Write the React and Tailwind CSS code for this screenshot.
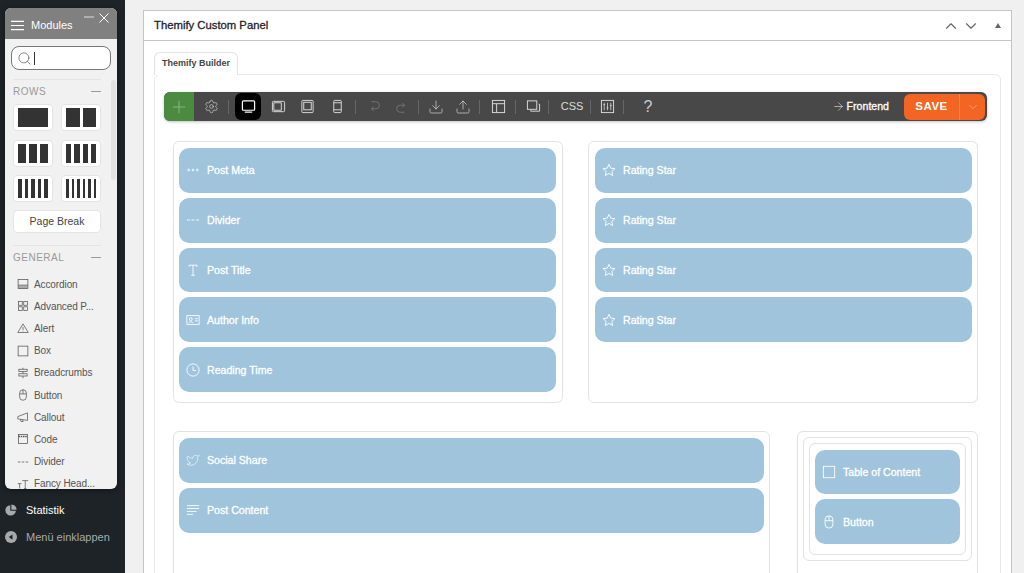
import { ChevronUp, ChevronDown, Search, Plus, Settings, Download, Upload, ArrowRight, Twitter } from "lucide-react";

const font = "font-['Liberation_Sans',Arial,sans-serif]";

function Svg({ size = 16, className = "", children }) {
  return (
    <svg width={size} height={size} viewBox="0 0 16 16" fill="none" stroke="currentColor" strokeWidth="1" className={`shrink-0 ${className}`}>
      {children}
    </svg>
  );
}

const icons = {
  dots: <><circle cx="3" cy="8" r="1" /><circle cx="8" cy="8" r="1" /><circle cx="13" cy="8" r="1" /></>,
  dashes: <path d="M1 8h3.5M6.2 8h3.5M11.5 8h3.5" />,
  title: <path d="M3.5 4.5V2.5h9v2M8 2.5v11.5M6 14h4" />,
  author: <><rect x="1" y="3" width="14" height="10" /><circle cx="5.5" cy="7" r="1.6" /><path d="M3 11.5c.4-2 4.6-2 5 0M10 6.5h3.5M10 9h3.5" /></>,
  clock: <><circle cx="8" cy="8" r="7" /><path d="M8 4v4.5h3.5" /></>,
  star: <path d="M8 1.5l2 4.4 4.8.5-3.6 3.2 1 4.7L8 11.9l-4.2 2.4 1-4.7L1.2 6.4 6 5.9z" />,
  lines: <path d="M1 3h14M1 6.3h14M1 9.6h11M1 13h7" />,
  box: <rect x="1.5" y="1.5" width="13" height="13" />,
  mouse: <><rect x="3.5" y="1" width="9" height="14" rx="4.5" /><path d="M3.5 6.5h9M8 1v5.5" /></>,
  accordion: <><rect x="1.5" y="2" width="13" height="12" /><path d="M1.5 9.5h13" /><path d="M2 10h12v3.5H2z" fill="currentColor" stroke="none" opacity=".45" /></>,
  grid: <><rect x="2" y="2" width="5" height="5" /><rect x="9" y="2" width="5" height="5" /><rect x="2" y="9" width="5" height="5" /><rect x="9" y="9" width="5" height="5" /></>,
  alert: <><path d="M8 2.5L15 14H1z" /><path d="M8 6.5v4M8 11.5v1" /></>,
  crumbs: <><path d="M8 1v14" /><rect x="2.5" y="3" width="11" height="3" fill="#f1f1f1" /><rect x="2.5" y="9" width="11" height="3" fill="#f1f1f1" /></>,
  callout: <><path d="M1 7.5l13-5v10l-13-2zM4.5 11l.8 3h3l-.8-2.4" /></>,
  code: <><rect x="2" y="2" width="12" height="12" /><path d="M2 4.5h12" strokeWidth="2" strokeDasharray="2 1" /></>,
  fancy: <path d="M7 3.5h8M11 3.5V14M9.5 14h3M1 7.5h5M3.5 7.5V14" />,
};

function Card({ icon, label, twitter }) {
  return (
    <div className="flex h-[44.8px] items-center rounded-[10px] bg-[#9fc4dc] pl-[7px] text-white">
      {twitter ? <Twitter size={14} strokeWidth={1} className="shrink-0" /> : <Svg size={14}>{icons[icon]}</Svg>}
      <span className="ml-[7px] mt-[2px] text-[10.6px] [-webkit-text-stroke:0.3px_white]">{label}</span>
    </div>
  );
}

function Column({ className = "", children }) {
  return <div className={`flex flex-col gap-[5px] rounded-[6px] border border-[#e2e2e2] ${className}`}>{children}</div>;
}

function Sep({ className = "" }) {
  return <span className={`h-[14px] w-px shrink-0 bg-[#666] ${className}`} />;
}

function Tool({ children, className = "" }) {
  return <span className={`flex h-[27px] w-[26px] shrink-0 items-center justify-center ${className}`}>{children}</span>;
}

function RowThumb({ cols }) {
  return (
    <div className="flex h-[27px] items-center justify-center gap-[3px] rounded-[4px] border border-[#e4e4e4] bg-white px-[4px]">
      {Array.from({ length: cols }).map((_, i) => (
        <span key={i} className="h-[19px] flex-1 bg-[#333]" />
      ))}
    </div>
  );
}

const rows = [1, 2, 3, 4, 5, 6];
const modules = [
  ["accordion", "Accordion"], ["grid", "Advanced P..."], ["alert", "Alert"], ["box", "Box"], ["crumbs", "Breadcrumbs"],
  ["mouse", "Button"], ["callout", "Callout"], ["code", "Code"], ["dashes", "Divider"], ["fancy", "Fancy Head..."],
];

function ModulesPanel() {
  return (
    <div className="absolute left-[5px] top-[8px] h-[481px] w-[112px] overflow-hidden rounded-[6px] bg-[#f1f1f1] shadow-[0_1px_5px_rgba(0,0,0,0.45)]">
      <div className="relative flex h-[31px] items-center bg-[#808080] pl-[6px] pt-[4px] text-white">
        <Svg size={13}><path d="M0 3h16M0 8h16M0 13h16" strokeWidth="1.4" /></Svg>
        <span className="ml-[7px] text-[11px]">Modules</span>
        <svg width="10" height="2" viewBox="0 0 10 2" stroke="currentColor" className="absolute left-[79px] top-[8px] text-[#ddd]"><path d="M0 1h10" /></svg>
        <svg width="10" height="10" viewBox="0 0 10 10" stroke="currentColor" className="absolute right-[8px] top-[5px]"><path d="M0.5 0.5l9 9M9.5 0.5l-9 9" /></svg>
      </div>
      <div className="px-[6px] pt-[7px]">
        <div className="flex h-[24px] items-center rounded-[8px] border border-[#777] bg-white pl-[5px] text-[#444]">
          <Search size={15} strokeWidth={1} />
          <span className="ml-[2px] h-[13px] w-px bg-[#333]" />
        </div>
      </div>
      <div className="relative pl-[8px] pr-[16px]">
        <div className="mt-[9px] flex items-center justify-between border-t border-[#e4e4e4] pb-[5px] pt-[4px] text-[10px] tracking-[0.5px] text-[#999]">
          <span>ROWS</span><span className="h-px w-[10px] bg-[#999]" />
        </div>
        <div className="grid grid-cols-2 gap-x-[8px] gap-y-[8.5px]">
          {rows.map((n) => <RowThumb key={n} cols={n} />)}
        </div>
        <div className="mt-[8px] flex h-[23px] items-center justify-center rounded-[4px] border border-[#e4e4e4] bg-white text-[10.5px] text-[#444]">Page Break</div>
        <div className="mt-[12px] flex items-center justify-between border-t border-[#e4e4e4] pt-[4px] text-[10px] tracking-[0.5px] text-[#999]">
          <span>GENERAL</span><span className="h-px w-[10px] bg-[#999]" />
        </div>
        <div className="mt-[8px] flex flex-col">
          {modules.map(([icon, label]) => (
            <div key={label} className="flex h-[22.2px] items-center pl-[4px] text-[10px] tracking-[-0.1px] text-[#555]">
              <Svg size={12} className="mr-[5px]">{icons[icon]}</Svg>
              <span className="whitespace-nowrap">{label}</span>
            </div>
          ))}
        </div>
      </div>
      <span className="absolute right-[1px] top-[72px] h-[100px] w-[5px] rounded-full bg-[#e2e2e2]" />
    </div>
  );
}

function Toolbar() {
  return (
    <div className="flex h-[29px] items-center rounded-[6px] bg-[#484848] text-[#ddd] shadow-[0_1px_3px_rgba(0,0,0,0.25)]">
      <span className="flex h-full w-[30px] shrink-0 items-center justify-center rounded-l-[6px] bg-[#4c8a42] text-[#8fbf85]">
        <Plus size={20} strokeWidth={1} />
      </span>
      <Tool className="ml-[4px]"><Settings size={15} strokeWidth={1} /></Tool>
      <Sep className="ml-[4px]" />
      <Tool className="ml-[6px] rounded-[6px] bg-black text-white">
        <Svg size={15}><rect x="1.5" y="2" width="13" height="10" rx="1" strokeWidth="1.3" /><path d="M4 14h8" strokeWidth="1.3" /></Svg>
      </Tool>
      <Tool className="ml-[4px]"><Svg size={15}><rect x="1.5" y="2.5" width="13" height="11" rx="1" /><path d="M3 4h8v8H3z" /></Svg></Tool>
      <Tool className="ml-[3px]"><Svg size={15}><rect x="2" y="1.5" width="12" height="13" rx="1" /><rect x="4" y="3.5" width="8" height="8" /></Svg></Tool>
      <Tool className="ml-[4px]"><Svg size={15}><rect x="4" y="1.5" width="8" height="13" rx="1" /><path d="M4 4h8M4 11.5h8" /></Svg></Tool>
      <Sep className="ml-[5px]" />
      <Tool className="ml-[6px] text-[#777]"><Svg size={14}><path d="M4 2h5a4 4 0 0 1 0 8H4M6.5 7.5L4 10l2.5 2.5" /></Svg></Tool>
      <Tool className="text-[#777]"><Svg size={14}><path d="M12 14H7a4 4 0 0 1 0-8h5M9.5 3.5L12 6 9.5 8.5" /></Svg></Tool>
      <Sep className="ml-[4px]" />
      <Tool className="ml-[4px]"><Download size={16} strokeWidth={1} /></Tool>
      <Tool className="ml-px"><Upload size={16} strokeWidth={1} /></Tool>
      <Sep className="ml-[3px]" />
      <Tool className="ml-[5px]"><Svg size={15}><rect x="1.5" y="1.5" width="13" height="13" /><path d="M1.5 5h13M6 5v9.5" /></Svg></Tool>
      <Sep className="ml-[4px]" />
      <Tool className="ml-[4px]"><Svg size={15}><rect x="1.5" y="2" width="10" height="9" /><path d="M13.5 5.5h1v7.5H5v-1" /></Svg></Tool>
      <Sep className="ml-[2px]" />
      <span className="ml-[7px] w-[32px] shrink-0 text-center text-[11px]">CSS</span>
      <Sep className="ml-[2px]" />
      <Tool className="ml-[3px]"><Svg size={15}><rect x="1.5" y="1.5" width="13" height="13" /><path d="M4.5 4v8M8 4v8M11.5 4v8M3.5 6h2M7 9.5h2M10.5 7h2" strokeWidth=".8" /></Svg></Tool>
      <Sep className="ml-[3px]" />
      <span className="ml-[11px] w-[26px] shrink-0 text-center text-[16px] leading-none text-[#ccc]">?</span>
      <span className="ml-auto flex items-center text-[10.6px] text-white [-webkit-text-stroke:0.3px_white]">
        <ArrowRight size={13} strokeWidth={1} className="mr-[2px]" />Frontend
      </span>
      <span className="ml-[15px] mr-[2px] flex h-[26px] w-[81px] shrink-0 items-center rounded-[6px] bg-[#f26522] text-white">
        <span className="flex-1 text-center text-[11.5px] font-bold tracking-[0.5px]">SAVE</span>
        <span className="flex h-full w-[26px] items-center justify-center border-l border-[#f58a4c] text-[#f9c19f]">
          <ChevronDown size={14} strokeWidth={1} />
        </span>
      </span>
    </div>
  );
}

export default function App() {
  return (
    <div className={`relative flex h-[573px] w-[1024px] overflow-hidden bg-[#f0f0f1] ${font}`}>
      <aside className="flex w-[125px] shrink-0 flex-col justify-end bg-[#1d2327] pb-[23px] pl-[5px] text-[11px]">
        <div className="flex h-[28px] items-center text-white">
          <Svg size={12} className="text-[#a7aaad]"><path d="M7 1.5a7 7 0 1 0 7.5 7.5H7z" fill="currentColor" stroke="none" /><path d="M8.5 0.5V7.5h7A7.5 7.5 0 0 0 8.5 .5z" fill="currentColor" stroke="none" /></Svg>
          <span className="ml-[9px]">Statistik</span>
        </div>
        <div className="flex h-[26px] items-center text-[#a7aaad]">
          <Svg size={12}><circle cx="8" cy="8" r="8" fill="currentColor" stroke="none" /><path d="M10 4.5v7L5 8z" fill="#1d2327" stroke="none" /></Svg>
          <span className="ml-[9px]">Menü einklappen</span>
        </div>
      </aside>

      <main className="flex-1 pl-[18px] pr-[12px] pt-[10px]">
        <div className="h-[600px] border border-[#c3c4c7] bg-white">
          <div className="flex h-[30px] items-center justify-between border-b border-[#c3c4c7] pl-[10px] pr-[10px]">
            <h2 className="text-[11.3px] text-[#1d2327] [-webkit-text-stroke:0.3px_#1d2327]">Themify Custom Panel</h2>
            <div className="flex items-center text-[#666]">
              <ChevronUp size={18} strokeWidth={1.5} />
              <ChevronDown size={18} strokeWidth={1.5} className="ml-[2px]" />
              <span className="ml-[15px] h-0 w-0 border-x-[3.5px] border-b-[5px] border-x-transparent border-b-[#666]" />
            </div>
          </div>

          <div className="pl-[10px] pr-[10px] pt-[11px]">
            <div className="relative z-10 -mb-px flex h-[23px] w-[84px] items-center justify-center rounded-t-[6px] border border-b-0 border-[#e2e2e2] bg-white text-[9px] font-bold text-[#444]">
              Themify Builder
            </div>
            <div className="h-[520px] rounded-[6px] border border-[#e8e8e8] pl-[9px] pr-[13px] pt-[17px]">
              <Toolbar />
              <div className="mt-[20px] flex gap-[25.5px] pl-[9px]">
                <Column className="h-[262px] w-[389.5px] pl-[5px] pr-[6px] pt-[6px]">
                  <Card icon="dots" label="Post Meta" />
                  <Card icon="dashes" label="Divider" />
                  <Card icon="title" label="Post Title" />
                  <Card icon="author" label="Author Info" />
                  <Card icon="clock" label="Reading Time" />
                </Column>
                <Column className="h-[262px] w-[389.5px] pl-[6px] pr-[5px] pt-[6px]">
                  <Card icon="star" label="Rating Star" />
                  <Card icon="star" label="Rating Star" />
                  <Card icon="star" label="Rating Star" />
                  <Card icon="star" label="Rating Star" />
                </Column>
              </div>
              <div className="mt-[28px] flex gap-[27px] pl-[9px]">
                <Column className="h-[160px] w-[597px] px-[5px] pt-[6px]">
                  <Card twitter label="Social Share" />
                  <Card icon="lines" label="Post Content" />
                </Column>
                <div className="h-[160px] w-[181px] rounded-[6px] border border-[#e2e2e2] p-[5px]">
                  <div className="h-[124px] rounded-[6px] border border-[#e2e2e2] p-[5px]">
                    <Column className="h-[112px] px-[5px] pt-[5.5px]">
                      <Card icon="box" label="Table of Content" />
                      <Card icon="mouse" label="Button" />
                    </Column>
                  </div>
                </div>
              </div>
            </div>
          </div>
        </div>
      </main>

      <ModulesPanel />
    </div>
  );
}
